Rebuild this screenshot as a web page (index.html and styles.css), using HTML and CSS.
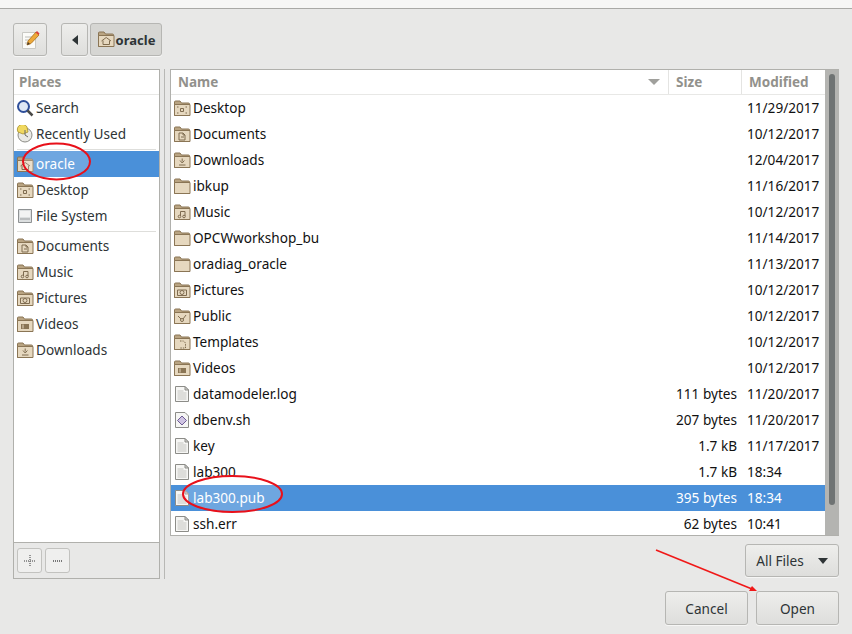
FILE: index.html
```html
<!DOCTYPE html>
<html lang="en">
<head>
  <meta charset="UTF-8" />
  <title>Open File</title>
  <link rel="stylesheet" href="styles.css">
</head>
<body>
  <svg class="defs" width="0" height="0">
    <symbol id="folder" viewBox="0 0 18 17">
      <path d="M1.500 15.500V2a1 1 0 0 1 1-1h4.500l1.500 2h7a1 1 0 0 1 1 1v11.500z" fill="#b9a482" stroke="#8a7555"/>
      <path d="M1.500 15.500V4.500h15.500v11z" fill="#e6d8bf" stroke="#8a7555"/>
    </symbol>
    <symbol id="f-home" viewBox="0 0 18 17">
      <use href="#folder"/>
      <path d="M4.500 10 9.200 6.500 14 10M6 9.500v4h6.500v-4" fill="none" stroke="#7f6c50"/>
    </symbol>
    <symbol id="f-desktop" viewBox="0 0 18 17">
      <use href="#folder"/>
      <path d="M4 7h1.500M12.500 7H14M4 13h1.500M12.500 13H14M7.500 8.500h3v3h-3z" fill="none" stroke="#7f6c50"/>
    </symbol>
    <symbol id="f-docs" viewBox="0 0 18 17">
      <use href="#folder"/>
      <path d="M6 14V7h4l2 2v5zM10 7v2h2M8 11h3" fill="none" stroke="#7f6c50"/>
    </symbol>
    <symbol id="f-down" viewBox="0 0 18 17">
      <use href="#folder"/>
      <path d="M9.200 6.500v3M7 8.500l2.200 2.500 2.200-2.500M6 13h6.500" fill="none" stroke="#7f6c50"/>
    </symbol>
    <symbol id="f-music" viewBox="0 0 18 17">
      <use href="#folder"/>
      <path d="M7.500 12V7.500h4.500V12" fill="none" stroke="#7f6c50"/>
      <circle cx="6.500" cy="12.500" r="1.300" fill="none" stroke="#7f6c50"/>
      <circle cx="11" cy="12.500" r="1.300" fill="none" stroke="#7f6c50"/>
    </symbol>
    <symbol id="f-pics" viewBox="0 0 18 17">
      <use href="#folder"/>
      <path d="M4.500 8h9v5.500h-9z" fill="none" stroke="#7f6c50"/>
      <circle cx="9" cy="10.500" r="2" fill="none" stroke="#7f6c50"/>
    </symbol>
    <symbol id="f-public" viewBox="0 0 18 17">
      <use href="#folder"/>
      <path d="M5 8l3 3M13 7l-3 4" fill="none" stroke="#7f6c50"/>
      <circle cx="9" cy="12" r="1.500" fill="none" stroke="#7f6c50"/>
    </symbol>
    <symbol id="f-templ" viewBox="0 0 18 17">
      <use href="#folder"/>
      <path d="M7 7h3.500l2 2v5H7" fill="none" stroke="#7f6c50" stroke-dasharray="1.500 1"/>
    </symbol>
    <symbol id="f-video" viewBox="0 0 18 17">
      <use href="#folder"/>
      <path d="M5 8h8v5H5z" fill="#8a7555"/>
      <path d="M7 8.500v4" stroke="#e6d8bf"/>
    </symbol>
    <symbol id="doc" viewBox="0 0 16 18">
      <path d="M1.500 1.500h9.500l3.500 3.500v11.500h-13z" fill="#f6f6f4" stroke="#8c8c88"/>
      <path d="M11 1.500V5h3.500z" fill="#d5d5d1" stroke="#8c8c88"/>
      <path d="M3.500 6h6M3.500 8h9M3.500 10h9M3.500 12h9M3.500 14h9" stroke="#c4c4c0"/>
    </symbol>
    <symbol id="script" viewBox="0 0 16 18">
      <path d="M1.500 1.500h9.500l3.500 3.500v11.500h-13z" fill="#f6f6f4" stroke="#8c8c88"/>
      <path d="M8 5l4.500 4.500L8 14 3.500 9.500z" fill="#cfc4e2" stroke="#6d5a94"/>
    </symbol>
  </svg>

  <div class="titlebar"></div>

  <div class="dialog">
    <div class="toolbar">
      <button class="btn btn-new">
        <svg width="22" height="22" viewBox="0 0 22 22">
          <path d="M3.500 3.500h13v16h-13z" fill="#fbfbf8" stroke="#c9c9c4"/>
          <path d="M6 8h8M6 11h6M6 14h4" stroke="#bdbdb8"/>
          <path d="M8 16l1-4 8-9 3 3-8 8.500z" fill="#eda93a" stroke="#a86f1c" stroke-width=".8"/>
          <path d="M16.500 3.500l1.500-1.500 2.500 2.500L19.500 6z" fill="#d9413c"/>
          <path d="M8 16l1-3 2 2z" fill="#4a3b2a"/>
        </svg>
      </button>
      <button class="btn btn-back"><span class="arrow-left"></span></button>
      <button class="btn btn-path">
        <svg class="icon" width="18" height="17"><use href="#f-home"/></svg>
        oracle
      </button>
    </div>

    <div class="main">
      <div class="places">
        <div class="places-list">
          <div class="places-head">Places</div>
          <div class="place">
            <svg class="icon" width="18" height="18" viewBox="0 0 18 18">
              <circle cx="7.500" cy="7.500" r="5.500" fill="#dfe8f5" stroke="#2f4f9a" stroke-width="2"/>
              <path d="M11.500 11.500l5 5" stroke="#4a4a48" stroke-width="2.500"/>
            </svg>
            Search
          </div>
          <div class="place">
            <svg class="icon" width="18" height="18" viewBox="0 0 18 18">
              <circle cx="9" cy="10" r="7" fill="#e9e9e5" stroke="#8c8c86"/>
              <path d="M2 7a5 5 0 0 1 9-5l1 5-5 2z" fill="#f0d860" stroke="#a68f2c" stroke-width=".8"/>
              <path d="M9 5v5l3 2" fill="none" stroke="#6a6a66"/>
            </svg>
            Recently Used
          </div>
          <div class="divider"></div>
          <div class="place selected">
            <svg class="icon" width="18" height="17"><use href="#f-home"/></svg>
            oracle
          </div>
          <div class="place">
            <svg class="icon" width="18" height="17"><use href="#f-desktop"/></svg>
            Desktop
          </div>
          <div class="place">
            <svg class="icon" width="18" height="18" viewBox="0 0 18 18">
              <path d="M2.500 2.500h13v13h-13z" fill="#dcdfe0" stroke="#8f9294"/>
              <path d="M4 4h10v6H4z" fill="#f2f3f3"/>
              <path d="M4 12h10" stroke="#9a9d9f"/>
            </svg>
            File System
          </div>
          <div class="divider"></div>
          <div class="place">
            <svg class="icon" width="18" height="17"><use href="#f-docs"/></svg>
            Documents
          </div>
          <div class="place">
            <svg class="icon" width="18" height="17"><use href="#f-music"/></svg>
            Music
          </div>
          <div class="place">
            <svg class="icon" width="18" height="17"><use href="#f-pics"/></svg>
            Pictures
          </div>
          <div class="place">
            <svg class="icon" width="18" height="17"><use href="#f-video"/></svg>
            Videos
          </div>
          <div class="place">
            <svg class="icon" width="18" height="17"><use href="#f-down"/></svg>
            Downloads
          </div>
        </div>
        <div class="places-tools">
          <button class="tool-btn">
            <svg width="12" height="12" viewBox="0 0 12 12"><path d="M0 6h12M6 0v12" stroke="#777" stroke-width="1.500" stroke-dasharray="1 1"/></svg>
          </button>
          <button class="tool-btn">
            <svg width="12" height="12" viewBox="0 0 12 12"><path d="M1 6h10" stroke="#777" stroke-width="2" stroke-dasharray="1 1"/></svg>
          </button>
        </div>
      </div>

      <div class="sash"></div>

      <div class="right">
        <div class="browser">
          <div class="files">
            <div class="file-head">
              <div class="col-name">Name<span class="sort-arrow"></span></div>
              <div class="col-size">Size</div>
              <div class="col-mod">Modified</div>
            </div>
            <div class="file"><div class="cell-name"><svg class="icon" width="18" height="17"><use href="#f-desktop"/></svg>Desktop</div><div class="cell-size"></div><div class="cell-mod">11/29/2017</div></div>
            <div class="file"><div class="cell-name"><svg class="icon" width="18" height="17"><use href="#f-docs"/></svg>Documents</div><div class="cell-size"></div><div class="cell-mod">10/12/2017</div></div>
            <div class="file"><div class="cell-name"><svg class="icon" width="18" height="17"><use href="#f-down"/></svg>Downloads</div><div class="cell-size"></div><div class="cell-mod">12/04/2017</div></div>
            <div class="file"><div class="cell-name"><svg class="icon" width="18" height="17"><use href="#folder"/></svg>ibkup</div><div class="cell-size"></div><div class="cell-mod">11/16/2017</div></div>
            <div class="file"><div class="cell-name"><svg class="icon" width="18" height="17"><use href="#f-music"/></svg>Music</div><div class="cell-size"></div><div class="cell-mod">10/12/2017</div></div>
            <div class="file"><div class="cell-name"><svg class="icon" width="18" height="17"><use href="#folder"/></svg>OPCWworkshop_bu</div><div class="cell-size"></div><div class="cell-mod">11/14/2017</div></div>
            <div class="file"><div class="cell-name"><svg class="icon" width="18" height="17"><use href="#folder"/></svg>oradiag_oracle</div><div class="cell-size"></div><div class="cell-mod">11/13/2017</div></div>
            <div class="file"><div class="cell-name"><svg class="icon" width="18" height="17"><use href="#f-pics"/></svg>Pictures</div><div class="cell-size"></div><div class="cell-mod">10/12/2017</div></div>
            <div class="file"><div class="cell-name"><svg class="icon" width="18" height="17"><use href="#f-public"/></svg>Public</div><div class="cell-size"></div><div class="cell-mod">10/12/2017</div></div>
            <div class="file"><div class="cell-name"><svg class="icon" width="18" height="17"><use href="#f-templ"/></svg>Templates</div><div class="cell-size"></div><div class="cell-mod">10/12/2017</div></div>
            <div class="file"><div class="cell-name"><svg class="icon" width="18" height="17"><use href="#f-video"/></svg>Videos</div><div class="cell-size"></div><div class="cell-mod">10/12/2017</div></div>
            <div class="file"><div class="cell-name"><svg class="icon icon-doc" width="16" height="18"><use href="#doc"/></svg>datamodeler.log</div><div class="cell-size">111 bytes</div><div class="cell-mod">11/20/2017</div></div>
            <div class="file"><div class="cell-name"><svg class="icon icon-doc" width="16" height="18"><use href="#script"/></svg>dbenv.sh</div><div class="cell-size">207 bytes</div><div class="cell-mod">11/20/2017</div></div>
            <div class="file"><div class="cell-name"><svg class="icon icon-doc" width="16" height="18"><use href="#doc"/></svg>key</div><div class="cell-size">1.7 kB</div><div class="cell-mod">11/17/2017</div></div>
            <div class="file"><div class="cell-name"><svg class="icon icon-doc" width="16" height="18"><use href="#doc"/></svg>lab300</div><div class="cell-size">1.7 kB</div><div class="cell-mod">18:34</div></div>
            <div class="file selected"><div class="cell-name"><svg class="icon icon-doc" width="16" height="18"><use href="#doc"/></svg>lab300.pub</div><div class="cell-size">395 bytes</div><div class="cell-mod">18:34</div></div>
            <div class="file"><div class="cell-name"><svg class="icon icon-doc" width="16" height="18"><use href="#doc"/></svg>ssh.err</div><div class="cell-size">62 bytes</div><div class="cell-mod">10:41</div></div>
          </div>
          <div class="scrollbar"><div class="thumb"></div></div>
        </div>

        <div class="filter-row">
          <button class="btn btn-filter">All Files<span class="caret"></span></button>
        </div>
        <div class="actions">
          <button class="btn btn-action">Cancel</button>
          <button class="btn btn-action">Open</button>
        </div>
      </div>
    </div>
  </div>

  <!-- red marks drawn on top of the screenshot -->
  <svg class="marks" width="852" height="634" viewBox="0 0 852 634">
    <ellipse cx="56.500" cy="161.500" rx="33.500" ry="18" fill="#fff" fill-opacity=".2" stroke="#e8101a" stroke-width="2"/>
    <ellipse cx="232.500" cy="494" rx="49.500" ry="18" fill="#fff" fill-opacity=".2" stroke="#e8101a" stroke-width="2"/>
    <path d="M656 550 752 589" stroke="#f01818" stroke-width="1.600"/>
    <path d="M757 591 749 591 752 586z" fill="#f01818"/>
  </svg>
</body>
</html>
```

FILE: styles.css
```css
* {
  box-sizing: border-box;
}

html, body {
  margin: 0;
  height: 634px;
  overflow: hidden;
}

body {
  position: relative;
  background: #e8e8e7;
  color: #2e3436;
  font-family: "Noto Sans", sans-serif;
  font-size: 13.600px;
}

.defs {
  position: absolute;
}

.titlebar {
  height: 9px;
  background: #f6f6f5;
  border-bottom: 1px solid #a9a9a6;
}

.dialog {
  padding: 14px 13px 0;
}

.icon {
  flex: none;
}

/* buttons */
.btn {
  display: flex;
  align-items: center;
  justify-content: center;
  padding: 0;
  font: inherit;
  color: #2e3436;
  border: 1px solid #b6b6b3;
  border-radius: 3px;
  background: linear-gradient(#eeeeec, #dededc);
  box-shadow: 0 1px 0 rgba(255, 255, 255, 0.6);
}

.toolbar {
  display: flex;
  height: 33px;
}

.btn-new {
  width: 34px;
  margin-right: 14px;
}

.btn-back {
  width: 27px;
  margin-right: 2px;
}

.arrow-left {
  border: 5px solid transparent;
  border-left: 0;
  border-right: 6px solid #2e3436;
}

.btn-path {
  width: 72px;
  gap: 1px;
  background: #d6d6d3;
  font-weight: 700;
  font-size: 13px;
}

.main {
  display: flex;
  margin-top: 13px;
}

/* left side */
.places {
  display: flex;
  flex-direction: column;
  width: 147px;
  height: 510px;
  border: 1px solid #b0b0ac;
}

.places-list {
  flex: 1;
  background: #fff;
}

.places-head {
  height: 25px;
  padding: 3px 0 0 5px;
  color: #92918c;
  font-weight: 700;
  font-size: 13.500px;
  border-bottom: 1px solid #e8e8e6;
}

.place {
  display: flex;
  align-items: center;
  gap: 2px;
  height: 26px;
  padding: 0 0 2px 2px;
}

.place .icon,
.cell-name .icon {
  margin-top: 2px;
}

.place.selected {
  background: #4a90d9;
  color: #fff;
}

.divider {
  height: 1px;
  margin: 2px 3px 1px;
  background: #dededb;
}

.places-tools {
  display: flex;
  gap: 3px;
  height: 36px;
  padding: 5px 3px;
  border-top: 1px solid #b0b0ac;
}

.tool-btn {
  display: flex;
  align-items: center;
  justify-content: center;
  width: 25px;
  height: 25px;
  padding: 0;
  background: #efefee;
  border: 1px solid #c2c2bf;
  border-radius: 3px;
}

.sash {
  width: 1px;
  height: 510px;
  margin: 0 5px 0 4px;
  background: #b8b8b5;
}

/* right side */
.right {
  width: 669px;
}

.browser {
  display: flex;
  height: 467px;
  border: 1px solid #b0b0ac;
  border-right: 0;
}

.files {
  flex: 1;
  overflow: hidden;
  background: #fff;
}

.file-head,
.file {
  display: grid;
  grid-template-columns: 497px 73px 85px;
  align-items: center;
}

.file-head {
  height: 25px;
  color: #92918c;
  font-weight: 700;
  font-size: 13.500px;
  border-bottom: 1px solid #e8e8e6;
}

.col-name,
.col-size,
.col-mod {
  display: flex;
  align-items: center;
  height: 100%;
  padding-left: 7px;
}

.col-size,
.col-mod {
  border-left: 1px solid #e4e4e2;
}

.sort-arrow {
  margin-left: auto;
  margin-right: 8px;
  border: 6px solid transparent;
  border-bottom: 0;
  border-top: 6px solid #a0a09c;
}

.file {
  height: 26px;
  color: #111;
}

.cell-name {
  display: flex;
  align-items: center;
  gap: 2px;
  padding: 0 0 2px 2px;
}

.icon-doc {
  margin-left: 1px;
  margin-right: 1px;
}

.cell-size {
  padding: 0 4px 2px 0;
  text-align: right;
  white-space: nowrap;
}

.cell-mod {
  padding: 0 0 2px 6px;
}

.file.selected {
  background: #4a90d9;
  color: #fff;
}

.scrollbar {
  width: 14px;
  padding: 4px 4px 30px;
  background: #b4b4b1;
}

.thumb {
  height: 100%;
  background: #6f7373;
  border-radius: 3px;
}

.filter-row {
  display: flex;
  justify-content: flex-end;
  margin-top: 8px;
}

.btn-filter {
  gap: 14px;
  width: 94px;
  height: 33px;
}

.caret {
  border: 5px solid transparent;
  border-bottom: 0;
  border-top: 6px solid #2e3436;
}

.actions {
  display: flex;
  justify-content: flex-end;
  gap: 8px;
  margin-top: 14px;
}

.btn-action {
  width: 83px;
  height: 34px;
}

.marks {
  position: absolute;
  top: 0;
  left: 0;
  pointer-events: none;
}
```
